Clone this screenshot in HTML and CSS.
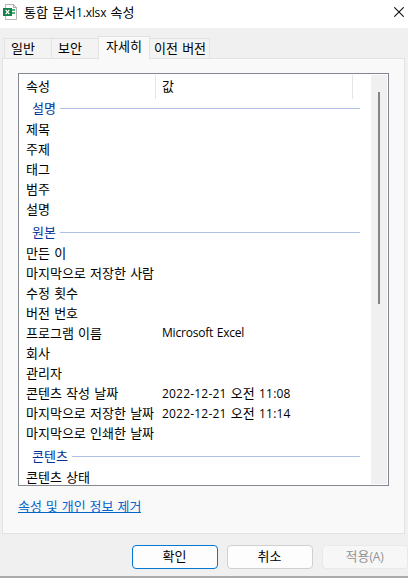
FILE: index.html
```html
<!DOCTYPE html>
<html lang="ko">
<head>
    <meta charset="utf-8">
    <title>통합 문서1.xlsx 속성</title>
    <link rel="stylesheet" href="styles.css">
</head>
<body>
    <div class="dialog">
        <header class="titlebar">
            <svg class="file-icon" width="15" height="16" viewBox="0 0 15 16">
                <path d="M2.5 .5h8l3 3v12h-11z" fill="#fff" stroke="#b5b5b5"/>
                <path d="M10.5 .5v3h3" fill="none" stroke="#a5a5a5"/>
                <path d="M8 5h4v2H8zM8 8h4v2H8z" fill="#4fb57c"/>
                <path d="M0 4h9v8H0z" fill="#16804a"/>
                <path d="M2.7 5.8l3.6 4.4M6.3 5.8l-3.6 4.4" stroke="#fff" stroke-width="1.3"/>
            </svg>
            <h1>통합 문서<span class="latin">1.xlsx</span> 속성</h1>
            <svg class="close" width="10" height="10" viewBox="0 0 10 10">
                <path d="M.3 .3l9.4 9.4M9.7 .3L.3 9.7" stroke="#111" stroke-width="1.1"/>
            </svg>
        </header>

        <nav class="tabs">
            <div class="tab">일반</div>
            <div class="tab">보안</div>
            <div class="tab active">자세히</div>
            <div class="tab last">이전 버전</div>
        </nav>

        <main class="panel">
            <div class="list">
                <div class="rows">
                    <div class="head"><span class="name">속성</span><span class="value">값</span></div>
                    <div class="group first">설명</div>
                    <div class="row">제목</div>
                    <div class="row">주제</div>
                    <div class="row">태그</div>
                    <div class="row">범주</div>
                    <div class="row">설명</div>
                    <div class="group">원본</div>
                    <div class="row">만든 이</div>
                    <div class="row">마지막으로 저장한 사람</div>
                    <div class="row">수정 횟수</div>
                    <div class="row">버전 번호</div>
                    <div class="row"><span class="name">프로그램 이름</span><span class="latin">Microsoft Excel</span></div>
                    <div class="row">회사</div>
                    <div class="row">관리자</div>
                    <div class="row"><span class="name">콘텐츠 작성 날짜</span><span><span class="num">2022-12-21</span> 오전 <span class="num">11:08</span></span></div>
                    <div class="row"><span class="name">마지막으로 저장한 날짜</span><span><span class="num">2022-12-21</span> 오전 <span class="num">11:14</span></span></div>
                    <div class="row">마지막으로 인쇄한 날짜</div>
                    <div class="group">콘텐츠</div>
                    <div class="row">콘텐츠 상태</div>
                </div>
                <div class="scrollbar"><div class="thumb"></div></div>
            </div>
            <a class="remove" href="#">속성 및 개인 정보 제거</a>
        </main>

        <footer class="buttons">
            <button class="ok">확인</button>
            <button>취소</button>
            <button disabled>적용<span class="latin">(A)</span></button>
        </footer>
    </div>
</body>
</html>
```
FILE: styles.css
```css
* {
    box-sizing: border-box;
}

body {
    margin: 0;
    background: #f0f0f0;
    color: #000;
    font-family: "Noto Sans CJK KR", sans-serif;
    font-size: 13px;
    line-height: 20px;
    word-spacing: 0.6px;
    white-space: nowrap;
}

.dialog {
    height: 578px;
    overflow: hidden;
    border-bottom: 2px solid #ababab;
}

.latin {
    font-family: "Open Sans", sans-serif;
    font-size: 12px;
    letter-spacing: -0.2px;
}

.num {
    font-family: "Open Sans", sans-serif;
    font-size: 12px;
    letter-spacing: 0.2px;
}

.titlebar {
    display: flex;
    align-items: center;
    height: 28px;
    padding: 0 4px 4px 3px;
    background: #fff;
}

.titlebar h1 {
    flex: 1;
    margin: 0 0 0 6px;
    font-size: 13px;
    font-weight: normal;
}

.tabs {
    display: flex;
    align-items: flex-end;
    height: 30px;
    padding-left: 4px;
}

.tab {
    width: 47px;
    height: 20px;
    padding-left: 6px;
    border: 1px solid #e2e2e2;
    border-right: 0;
    border-bottom: 0;
    background: #f3f3f3;
    line-height: 18px;
}

.tab.active {
    width: 52px;
    height: 23px;
    margin-bottom: -1px;
    padding-left: 7px;
    border-right: 1px solid #e2e2e2;
    background: #f9f9f9;
    z-index: 1;
}

.tab.last {
    width: 60px;
    padding-left: 4px;
    border-left: 0;
    border-right: 1px solid #e2e2e2;
}

.panel {
    height: 476px;
    margin: 0 3px 0 2px;
    padding: 14px 15px;
    border: 1px solid #e2e2e2;
    background: #f9f9f9;
}

.list {
    display: flex;
    width: 371px;
    height: 413px;
    padding: 1px;
    border: 1px solid #828790;
    background: #fff;
    overflow: hidden;
}

.rows {
    width: 351px;
}

.head {
    display: flex;
    width: 333px;
    height: 24px;
    padding-left: 6px;
    border-right: 1px solid #e5e5e5;
    line-height: 22px;
}

.head .name {
    border-right: 1px solid #e5e5e5;
}

.head .value {
    padding-left: 6px;
}

.name {
    width: 130px;
}

.row {
    display: flex;
    height: 20px;
    padding-left: 6px;
}

.row .name {
    width: 136px;
}

.group {
    display: flex;
    align-items: center;
    height: 24px;
    margin-right: 11px;
    padding: 2px 0 0 12px;
    color: #003399;
}

.group.first {
    height: 20px;
    padding: 0 0 2px 12px;
}

.group::after {
    content: "";
    flex: 1;
    height: 1px;
    margin-left: 4px;
    background: #b0bfe3;
}

.scrollbar {
    width: 16px;
    padding: 17px 7px 0;
    background: #f0f0f0;
}

.thumb {
    width: 2px;
    height: 212px;
    background: #858585;
}

.remove {
    display: inline-block;
    height: 17px;
    margin-top: 10px;
    border-bottom: 1px solid #0066cc;
    color: #0066cc;
    line-height: 19px;
    text-decoration: none;
    word-spacing: 0.3px;
}

.buttons {
    display: flex;
    justify-content: flex-end;
    gap: 9px;
    padding: 11px 1px 0 0;
    margin-right: -1px;
}

button {
    width: 86px;
    height: 24px;
    padding: 0 1px 2px 0;
    border: 1px solid #d0d0d0;
    border-radius: 4px;
    background: #fdfdfd;
    color: #000;
    font: inherit;
    line-height: 20px;
}

button.ok {
    border-color: #0078d4;
}

button:disabled {
    border-color: #e9e9e9;
    background: #f7f7f7;
    color: #929292;
}
```
